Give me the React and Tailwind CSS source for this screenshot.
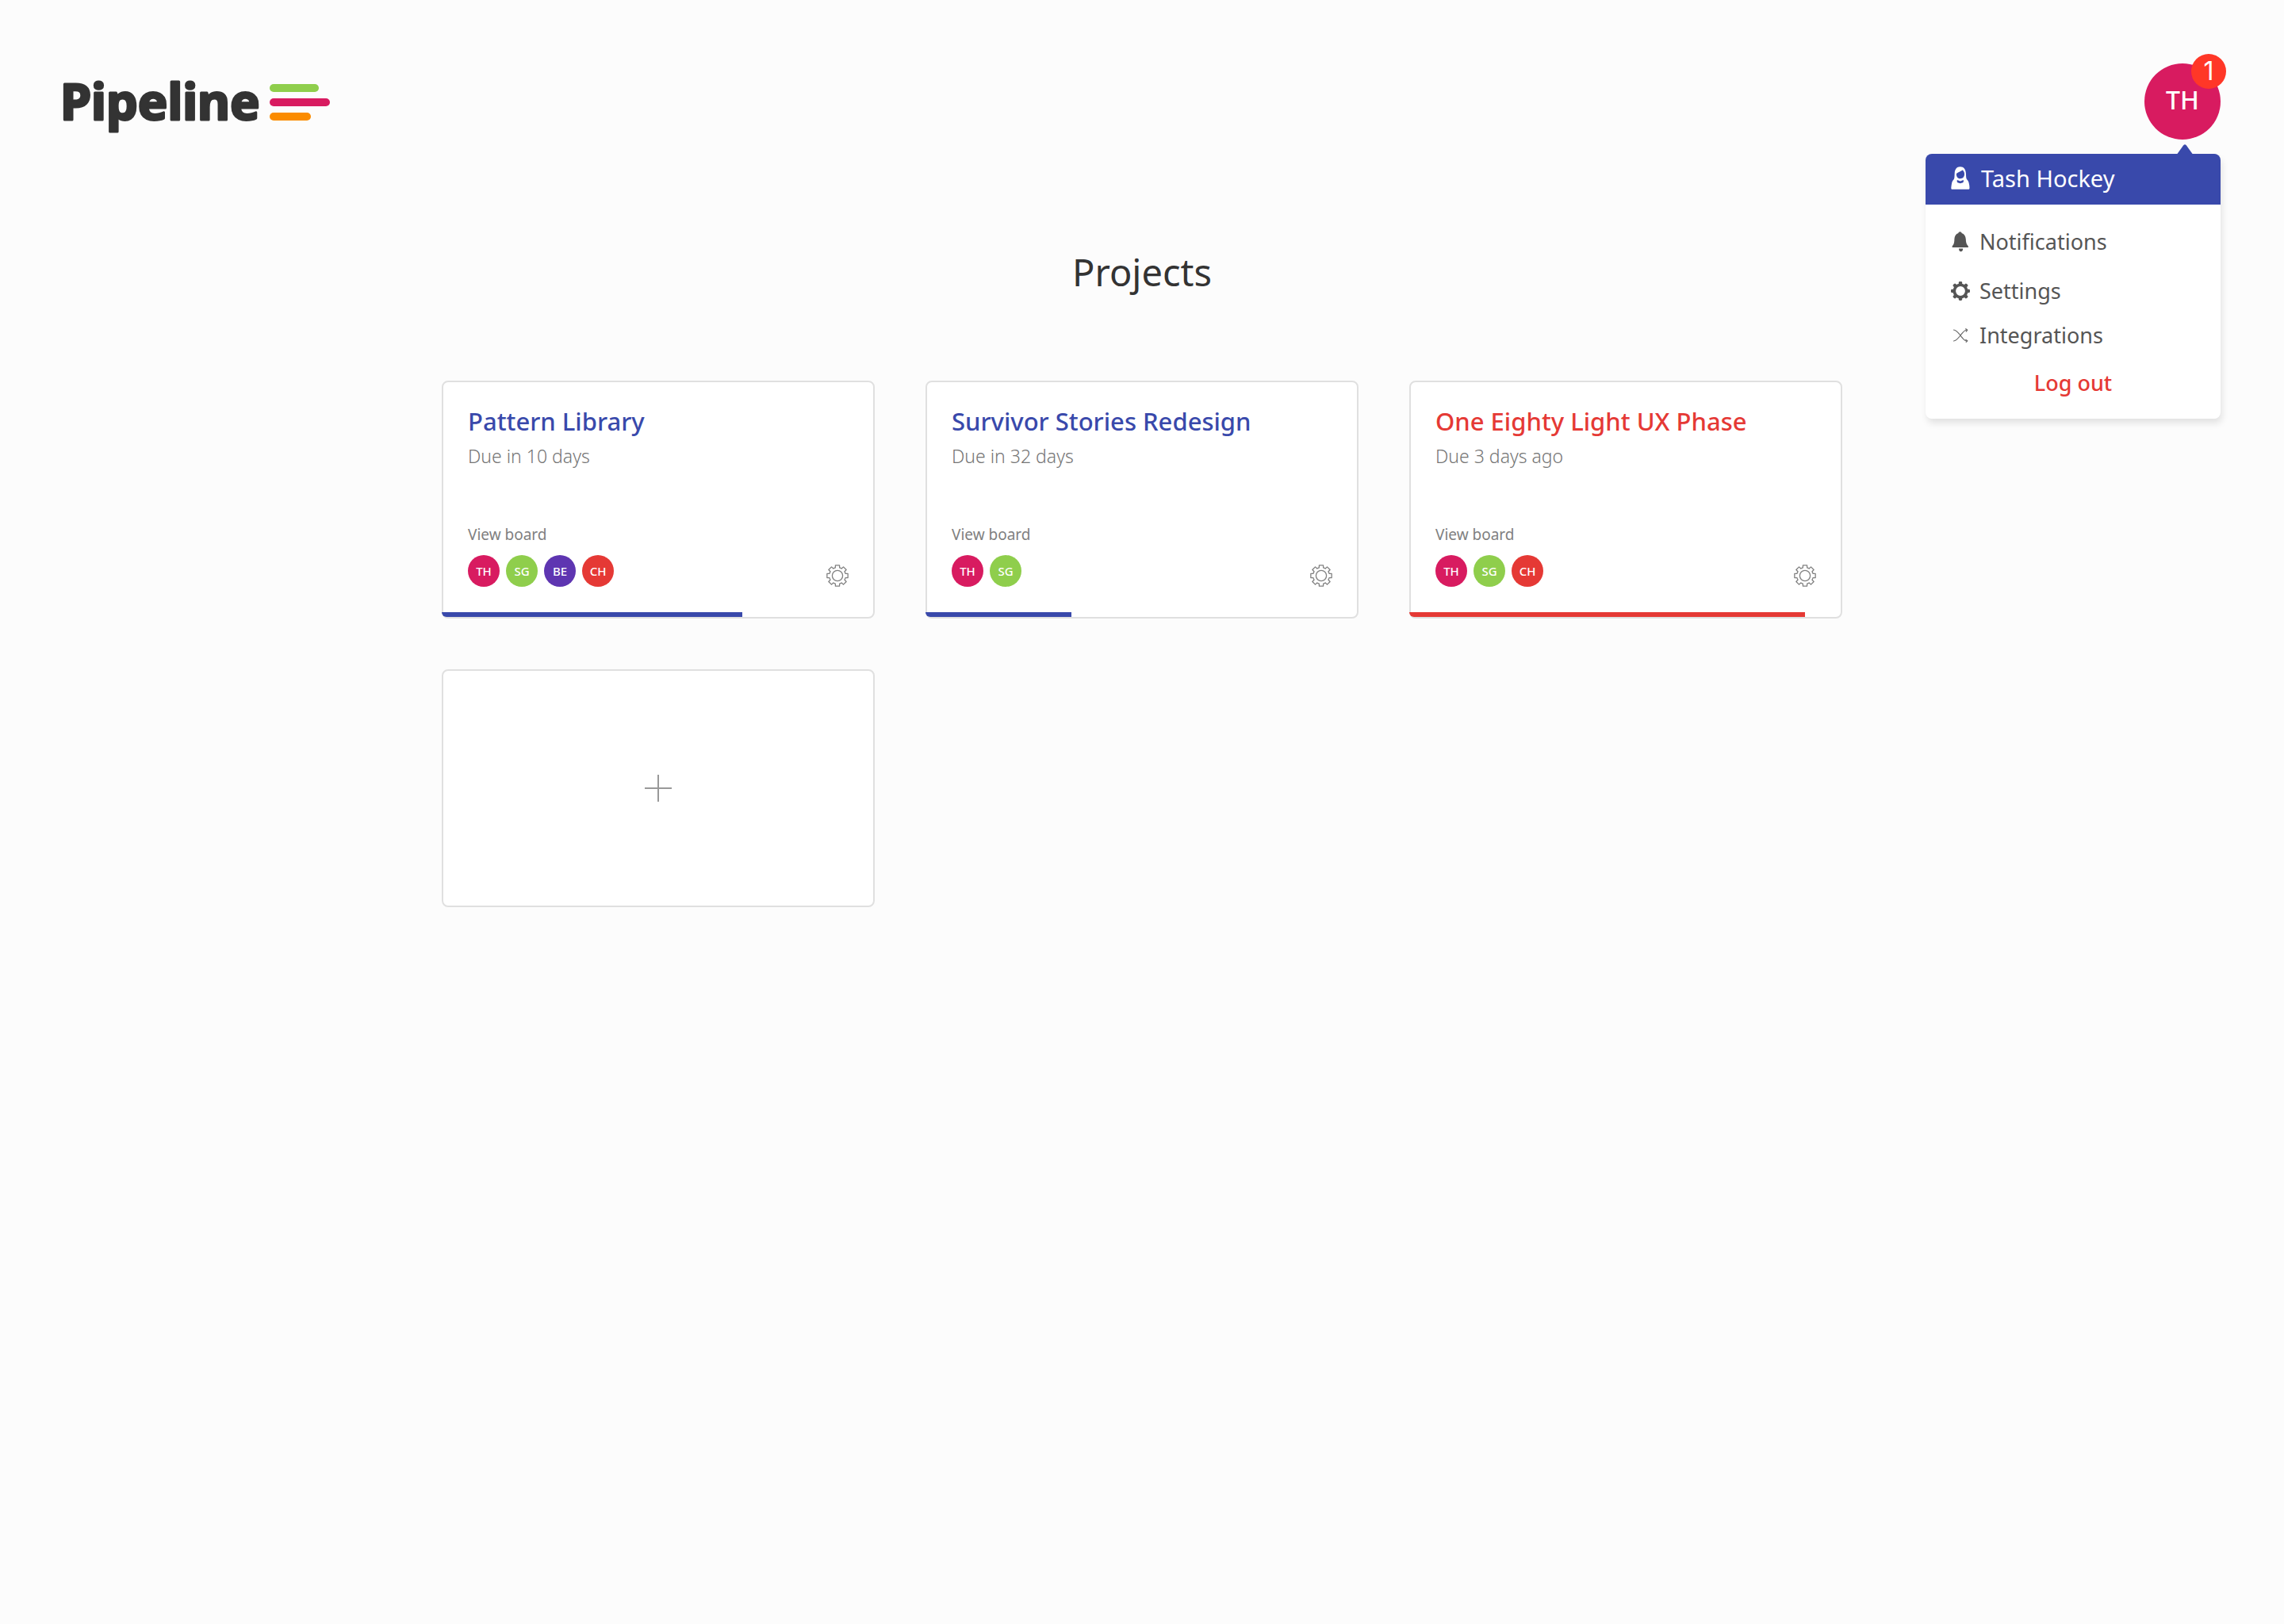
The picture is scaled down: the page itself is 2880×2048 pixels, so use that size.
const projects = [
  { name: "Pattern Library", due: "Due in 10 days", progress: 69.4, members: ["TH", "SG", "BE", "CH"], late: false },
  { name: "Survivor Stories Redesign", due: "Due in 32 days", progress: 33.7, members: ["TH", "SG"], late: false },
  { name: "One Eighty Light UX Phase", due: "Due 3 days ago", progress: 91.4, members: ["TH", "SG", "CH"], late: true },
];

const memberColors = {
  TH: "bg-[#d81b60]",
  SG: "bg-[#8fce4c]",
  BE: "bg-[#5e35b1]",
  CH: "bg-[#e53935]",
};

// Closed outline of an eight-toothed cog centred on (14, 14).
function cogOutline(outer, root) {
  const point = (r, deg) => {
    const a = (deg * Math.PI) / 180;
    return `${(14 + r * Math.sin(a)).toFixed(2)} ${(14 - r * Math.cos(a)).toFixed(2)}`;
  };
  let d = "";
  for (let k = 0; k < 8; k++) {
    const c = k * 45;
    d += `${k === 0 ? "M" : "L"}${point(root, c - 15)} L${point(outer, c - 11)} L${point(outer, c + 11)} L${point(root, c + 15)} A${root} ${root} 0 0 1 ${point(root, c + 30)} `;
  }
  return d + "Z";
}

function CogOutlineIcon() {
  return (
    <svg viewBox="0 0 28 28" className="size-7" fill="none" stroke="#808080" strokeWidth="1.3" strokeLinejoin="round" aria-hidden="true">
      <path d={cogOutline(13.4, 10.4)} />
      <circle cx="14" cy="14" r="6.6" />
    </svg>
  );
}

function CogIcon() {
  return (
    <svg viewBox="0 0 24 24" className="size-6" aria-hidden="true">
      {[0, 45, 90, 135].map((deg) => (
        <g key={deg} transform={`rotate(${deg} 12 12)`}>
          <rect x="9.8" y="0" width="4.4" height="5" rx="1.4" fill="#555" />
          <rect x="9.8" y="19" width="4.4" height="5" rx="1.4" fill="#555" />
        </g>
      ))}
      <circle cx="12" cy="12" r="7.7" fill="none" stroke="#555" strokeWidth="3.6" />
    </svg>
  );
}

function BellIcon() {
  return (
    <svg viewBox="0 0 24 26" className="h-[26px] w-6" fill="#555" aria-hidden="true">
      <path d="M11.5 0.3c1.2 0 2 .7 2.1 1.8 3.2 1 5 3.8 5.2 7.5.2 4.700 1 6.700 2.700 8.300.9.900.6 2.100-.7 2.100H2.800c-1.300 0-1.700-1.200-.8-2.100 1.700-1.600 2.300-3.600 2.400-8.300.1-3.700 1.800-6.500 5-7.500.100-1.100.900-1.800 2.100-1.800z" />
      <path d="M10 21.400h5.200c0 2.300-1 3.900-2.700 3.900-1.500 0-2.500-1.600-2.500-3.900z" />
    </svg>
  );
}

function ShuffleIcon() {
  return (
    <svg viewBox="0 0 24 24" className="size-6" fill="none" stroke="#666" strokeWidth="1.2" strokeLinecap="round" aria-hidden="true">
      <path d="M3.500 5C6.500 5 8.500 7.500 12 12S17 19 20 19M3.500 19C6.500 19 8.500 16.500 12 12S17 5 20 5" />
      <path d="M18.800 3.700L20.800 5.200 19.200 7M18.800 17.400L20.800 18.800 19.200 20.400" strokeLinejoin="round" />
    </svg>
  );
}

function PersonIcon() {
  return (
    <svg viewBox="0 0 24 30" className="h-[30px] w-6" aria-hidden="true">
      <path
        fill="#fff"
        fillRule="evenodd"
        d="M11.7 0.3C16.3 0.3 18.600 3.600 18.900 8.300C19.100 11.500 19.100 14 19.700 15.500C20.400 16.900 22 18.100 22.600 20.400C23.200 22.600 23.500 25 23.500 27C23.500 28.300 22.900 28.800 21.800 28.800H2C0.800 28.800 0.200 28.300 0.300 27C0.400 25 0.700 22.600 1.200 20.400C1.800 18.100 3.400 16.900 4 15.500C4.600 14 4.500 11.500 4.700 8.300C5 3.600 7.200 0.300 11.700 0.300Z M14.600 4.600C12.800 6.200 9.700 7 6.900 8.900C6.700 12.600 8.400 15.200 11.800 15.200C15.300 15.200 17.200 12.600 17 9C16.900 7.200 16 5.600 14.600 4.600Z M7.900 17C7.400 18.400 7.600 19.400 8.400 20.200L11.800 21.200L15.200 20.200C16 19.400 16.200 18.400 15.700 17L11.800 18.400Z"
      />
    </svg>
  );
}

function Logo() {
  return (
    <a href="#" aria-label="Pipeline home" className="shrink-0">
      <svg viewBox="0 0 344 96" className="h-24 w-[344px]">
        <text
          x="0"
          y="71"
          fontSize="63"
          fontWeight="700"
          fill="#333"
          stroke="#333"
          strokeWidth="3"
          strokeLinejoin="round"
          className="font-['Noto_Sans',sans-serif]"
        >
          Pipeline
        </text>
        <rect x="264" y="26" width="62" height="10" rx="5" fill="#8fce4c" />
        <rect x="264" y="44" width="76" height="10" rx="5" fill="#d81b60" />
        <rect x="264" y="62" width="52" height="10" rx="5" fill="#fb8c00" />
      </svg>
    </a>
  );
}

function MenuItem({ icon, children }) {
  return (
    <a href="#" className="flex items-center gap-3 text-[27px] leading-8 text-[#555]">
      {icon}
      {children}
    </a>
  );
}

function UserMenu() {
  return (
    <div className="relative">
      <button type="button" aria-expanded="true" className="block size-24 rounded-full bg-[#d81b60] pb-1 text-[32px] leading-10 font-medium text-white">
        TH
      </button>
      <span className="absolute -top-3 -right-[7px] flex size-11 items-center justify-center rounded-full bg-[#ff3727] font-['Inter',sans-serif] text-[32px] leading-8 text-white">
        1
      </span>
      <nav className="absolute top-[114px] right-0 w-[372px] rounded-lg bg-white shadow-[2px_6px_8px_rgba(0,0,0,0.1)]">
        <svg viewBox="0 0 22 14" className="absolute -top-3 right-[34px] h-[14px] w-[22px]" fill="#3949ab" aria-hidden="true">
          <path d="M0 14 L9 1.500 Q11 -1 13 1.500 L22 14 Z" />
        </svg>
        <a href="#" className="flex h-16 items-center gap-[14px] rounded-t-lg bg-[#3949ab] px-8 pb-0.5 text-[29px] leading-8 text-white">
          <PersonIcon />
          Tash Hockey
        </a>
        <div className="flex flex-col px-8 pt-[31px] pb-[29px]">
          <MenuItem icon={<BellIcon />}>Notifications</MenuItem>
          <div className="mt-[30px]">
            <MenuItem icon={<CogIcon />}>Settings</MenuItem>
          </div>
          <div className="mt-6">
            <MenuItem icon={<ShuffleIcon />}>Integrations</MenuItem>
          </div>
          <button type="button" className="mt-7 self-center text-[27px] leading-8 font-medium text-[#e53935]">
            Log out
          </button>
        </div>
      </nav>
    </div>
  );
}

function ProjectCard({ project }) {
  const { name, due, progress, members, late } = project;
  return (
    <article className="relative flex h-[300px] flex-col justify-between rounded-lg border-2 border-[#e0e0e0] bg-white pt-[29px] pr-[31px] pb-[38px] pl-[31px]">
      <div>
        <h2 className={late ? "text-[31px] leading-10 font-medium text-[#e53935]" : "text-[31px] leading-10 font-medium text-[#3949ab]"}>{name}</h2>
        <p className="mt-2 text-[23px] leading-8 font-light text-[#757575]">{due}</p>
      </div>
      <div className="flex items-end justify-between">
        <div>
          <a href="#" className="block text-[19px] leading-7 text-[#808080]">View board</a>
          <ul className="mt-3 flex gap-2">
            {members.map((m) => (
              <li key={m} className={`flex size-10 items-center justify-center rounded-full text-[15px] leading-5 font-medium text-white ${memberColors[m]}`}>
                {m}
              </li>
            ))}
          </ul>
        </div>
        <button type="button" aria-label={`${name} settings`}>
          <CogOutlineIcon />
        </button>
      </div>
      <div className="absolute -inset-x-0.5 bottom-0 h-1.5">
        <div className={late ? "h-full rounded-bl-md bg-[#e53935]" : "h-full rounded-bl-md bg-[#3949ab]"} style={{ width: `${progress}%` }} />
      </div>
    </article>
  );
}

export default function App() {
  return (
    <div className="min-h-screen bg-[#fcfcfc] font-['Noto_Sans',sans-serif]">
      <header className="flex items-start justify-between pt-20 pr-20 pl-[76px]">
        <Logo />
        <UserMenu />
      </header>
      <main className="mx-auto max-w-[1766px] pt-[139px] pb-20">
        <h1 className="text-center text-[47px] leading-[56px] text-[#333]">Projects</h1>
        <div className="mt-[109px] grid grid-cols-3 gap-16">
          {projects.map((p) => (
            <ProjectCard key={p.name} project={p} />
          ))}
          <button type="button" aria-label="Add project" className="flex h-[300px] items-center justify-center rounded-lg border-2 border-[#e0e0e0] bg-white">
            <svg viewBox="0 0 34 34" className="size-[34px]" stroke="#999" strokeWidth="2" aria-hidden="true">
              <path d="M17 0V34M0 17H34" />
            </svg>
          </button>
        </div>
      </main>
    </div>
  );
}
